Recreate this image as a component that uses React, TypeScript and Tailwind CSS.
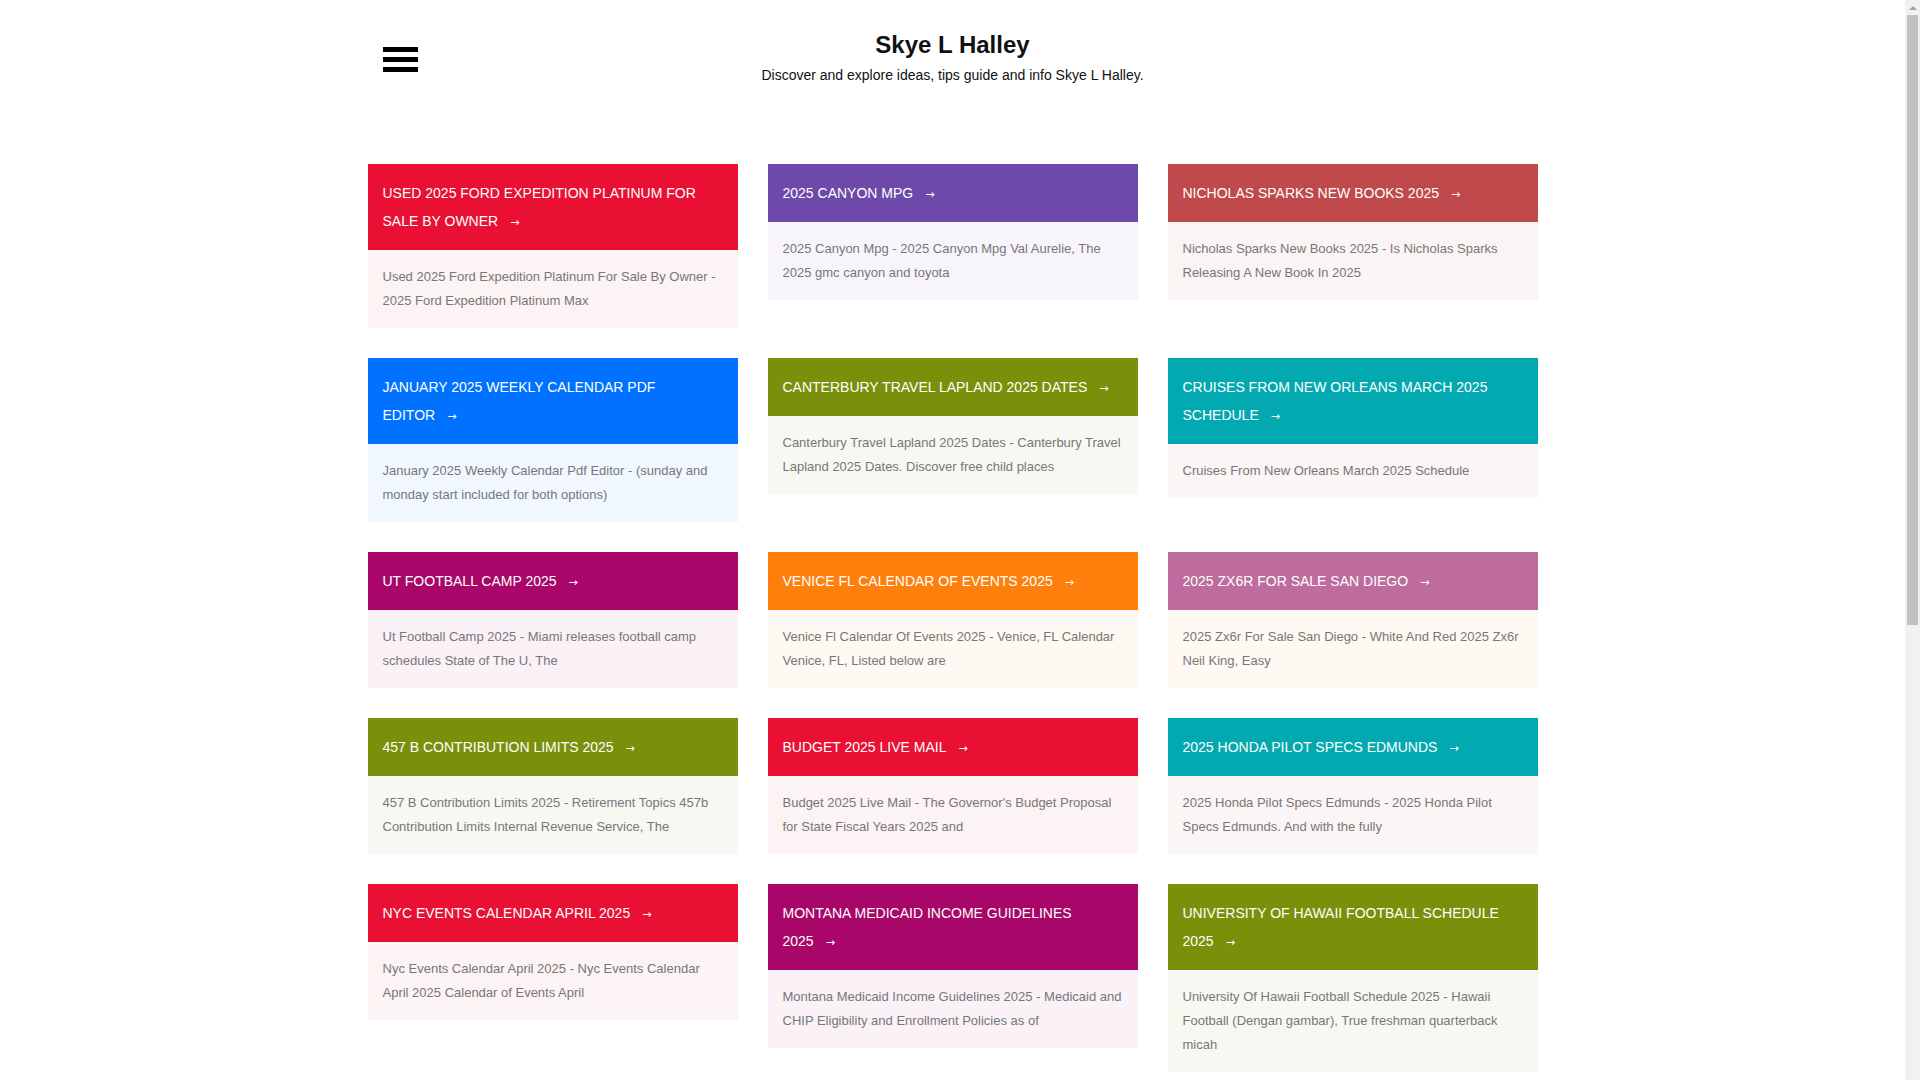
import React from "react";

interface Post {
  title: string;
  excerpt: string;
  head: string;
  body: string;
}

const posts: Post[] = [
  {
    title: "Used 2025 Ford Expedition Platinum For Sale By Owner",
    excerpt: "Used 2025 Ford Expedition Platinum For Sale By Owner - 2025 Ford Expedition Platinum Max",
    head: "bg-[#e91034]",
    body: "bg-[#fcf3f5]",
  },
  {
    title: "2025 Canyon Mpg",
    excerpt: "2025 Canyon Mpg - 2025 Canyon Mpg Val Aurelie, The 2025 gmc canyon and toyota",
    head: "bg-[#6d4aa9]",
    body: "bg-[#f7f5fb]",
  },
  {
    title: "Nicholas Sparks New Books 2025",
    excerpt: "Nicholas Sparks New Books 2025 - Is Nicholas Sparks Releasing A New Book In 2025",
    head: "bg-[#c0494b]",
    body: "bg-[#faf4f4]",
  },
  {
    title: "January 2025 Weekly Calendar Pdf Editor",
    excerpt: "January 2025 Weekly Calendar Pdf Editor - (sunday and monday start included for both options)",
    head: "bg-[#0072ff]",
    body: "bg-[#f0f7ff]",
  },
  {
    title: "Canterbury Travel Lapland 2025 Dates",
    excerpt: "Canterbury Travel Lapland 2025 Dates - Canterbury Travel Lapland 2025 Dates. Discover free child places",
    head: "bg-[#7a900b]",
    body: "bg-[#f8f8f3]",
  },
  {
    title: "Cruises From New Orleans March 2025 Schedule",
    excerpt: "Cruises From New Orleans March 2025 Schedule",
    head: "bg-[#02a9b0]",
    body: "bg-[#fbf5f5]",
  },
  {
    title: "Ut Football Camp 2025",
    excerpt: "Ut Football Camp 2025 - Miami releases football camp schedules State of The U, The",
    head: "bg-[#a80769]",
    body: "bg-[#faf2f7]",
  },
  {
    title: "Venice Fl Calendar Of Events 2025",
    excerpt: "Venice Fl Calendar Of Events 2025 - Venice, FL Calendar Venice, FL, Listed below are",
    head: "bg-[#ff7f0c]",
    body: "bg-[#fff9f3]",
  },
  {
    title: "2025 Zx6r For Sale San Diego",
    excerpt: "2025 Zx6r For Sale San Diego - White And Red 2025 Zx6r Neil King, Easy",
    head: "bg-[#be6b9e]",
    body: "bg-[#fff9f3]",
  },
  {
    title: "457 B Contribution Limits 2025",
    excerpt: "457 B Contribution Limits 2025 - Retirement Topics 457b Contribution Limits Internal Revenue Service, The",
    head: "bg-[#7a900b]",
    body: "bg-[#f8f8f3]",
  },
  {
    title: "Budget 2025 Live Mail",
    excerpt: "Budget 2025 Live Mail - The Governor's Budget Proposal for State Fiscal Years 2025 and",
    head: "bg-[#e91034]",
    body: "bg-[#fcf3f5]",
  },
  {
    title: "2025 Honda Pilot Specs Edmunds",
    excerpt: "2025 Honda Pilot Specs Edmunds - 2025 Honda Pilot Specs Edmunds. And with the fully",
    head: "bg-[#02a9b0]",
    body: "bg-[#fbf5f5]",
  },
  {
    title: "Nyc Events Calendar April 2025",
    excerpt: "Nyc Events Calendar April 2025 - Nyc Events Calendar April 2025 Calendar of Events April",
    head: "bg-[#e91034]",
    body: "bg-[#fcf3f5]",
  },
  {
    title: "Montana Medicaid Income Guidelines 2025",
    excerpt: "Montana Medicaid Income Guidelines 2025 - Medicaid and CHIP Eligibility and Enrollment Policies as of",
    head: "bg-[#a80769]",
    body: "bg-[#faf2f7]",
  },
  {
    title: "University Of Hawaii Football Schedule 2025",
    excerpt: "University Of Hawaii Football Schedule 2025 - Hawaii Football (Dengan gambar), True freshman quarterback micah",
    head: "bg-[#7a900b]",
    body: "bg-[#f8f8f3]",
  },
];

const PostCard = ({ post }: { post: Post }) => (
  <div>
    <a href="#" className={`block px-[15px] py-[15px] ${post.head}`}>
      <h2 className="text-[14px] leading-[28px] uppercase text-white font-normal">
        {post.title}
        <span className="ml-[12px] font-['DejaVu_Sans',sans-serif] text-[11px] leading-none">→</span>
      </h2>
    </a>
    <div className={`px-[15px] py-[15px] ${post.body}`}>
      <p className="text-[13px] leading-[24px] text-[#777]">{post.excerpt}</p>
    </div>
  </div>
);

// the page scrollbar, as it shows in the screenshot
const ScrollTrack = () => (
  <div className="w-[15px] h-screen bg-[#f1f1f1] flex flex-col items-center">
    <div className="h-[15px] flex items-center justify-center">
      <div className="w-0 h-0 border-l-[4px] border-r-[4px] border-b-[4px] border-l-transparent border-r-transparent border-b-[#a3a3a3]" />
    </div>
    <div className="w-[11px] h-[610px] bg-[#c1c1c1]" />
  </div>
);

export default function App() {
  return (
    <div className="flex h-screen bg-white font-['Liberation_Sans',Arial,sans-serif] text-[#222]">
      <div className="flex-1 overflow-y-auto">
        <div className="w-[1170px] mx-auto pb-[160px]">
          <header className="grid grid-cols-[1fr_auto_1fr] pt-[31px]">
            <button className="self-start mt-[16px] ml-[15px] w-[35px] flex flex-col gap-[5px]">
              <span className="block h-[5px] bg-black" />
              <span className="block h-[5px] bg-black" />
              <span className="block h-[5px] bg-black" />
            </button>
            <div className="text-center">
              <h1 className="text-[24px] leading-[28px] font-bold text-[#111]">Skye L Halley</h1>
              <p className="mt-[6px] text-[14px] leading-[20px] text-[#111]">
                Discover and explore ideas, tips guide and info Skye L Halley.
              </p>
            </div>
            <div />
          </header>

          <main className="mt-[79px] grid grid-cols-3 gap-[30px] items-start">
            {posts.map((p) => (
              <PostCard key={p.title} post={p} />
            ))}
          </main>
        </div>
      </div>
      <ScrollTrack />
    </div>
  );
}
